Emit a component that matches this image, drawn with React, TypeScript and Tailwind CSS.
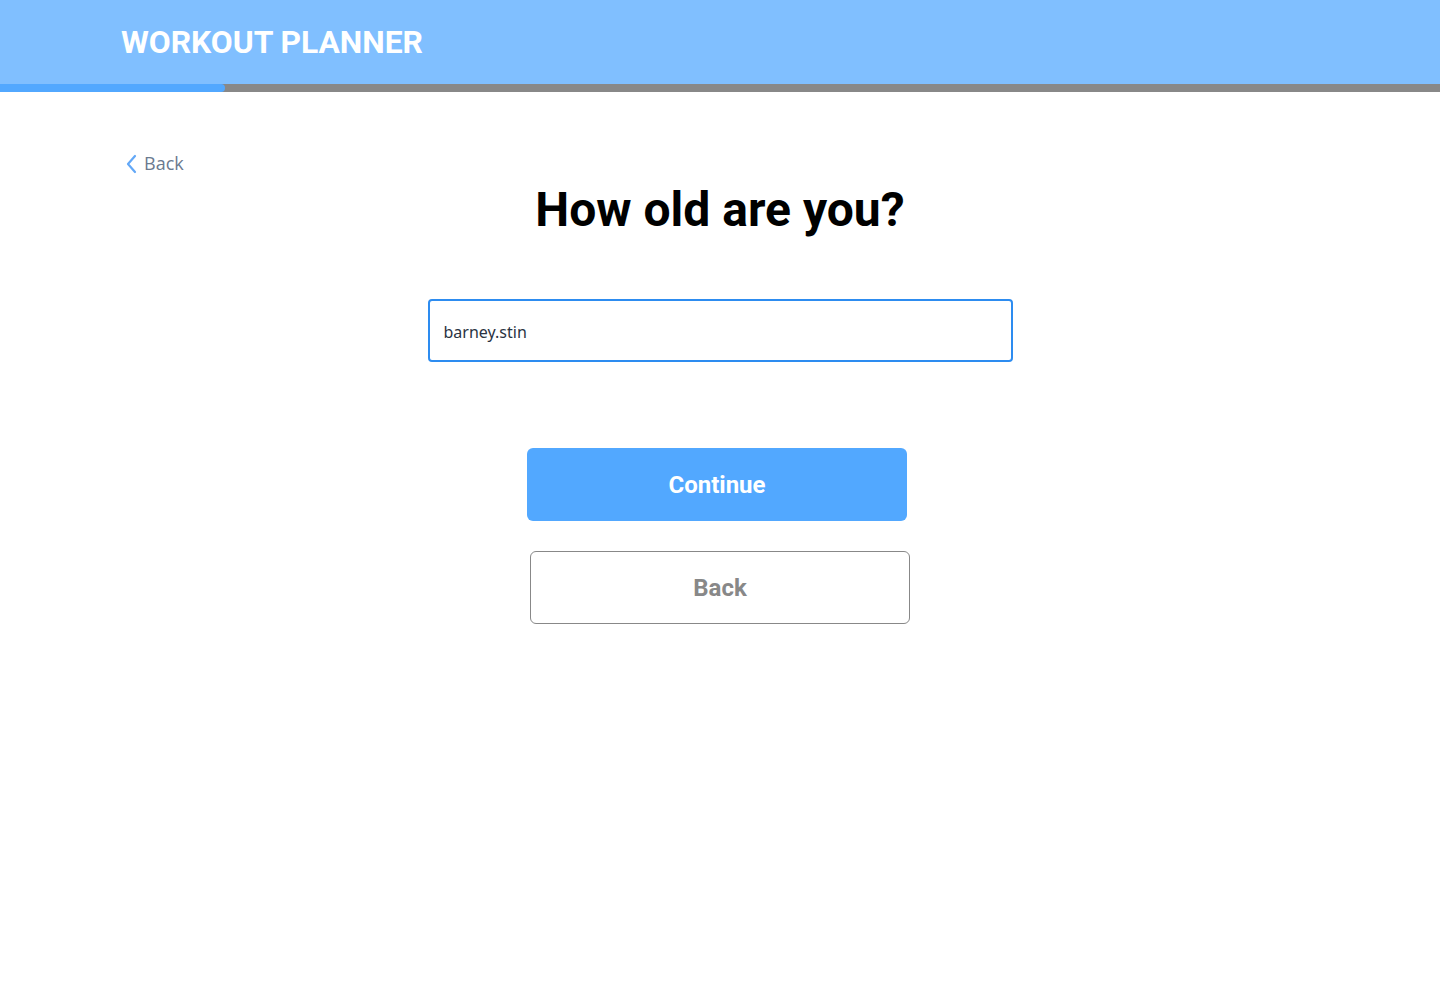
import React from "react";

export default function App() {
  return (
    <div className="min-h-[1000px] w-full bg-white" style={{ fontFamily: "Roboto, sans-serif" }}>
      <header className="h-[84px] bg-[#80bfff] flex items-center pl-[121px] pt-[2px]">
        <h1 className="text-[31.8px] font-bold text-white leading-none">WORKOUT PLANNER</h1>
      </header>
      <div className="h-[8px] bg-[#888888] flex">
        <div className="w-[225px] h-full bg-[#52a8ff] rounded-r-full" />
      </div>
      <div className="relative">
        <div className="pl-[124px] pt-[58px]">
          <button className="flex items-center gap-[4px] text-[18px] text-[#6b7a8f]" style={{ fontFamily: '"Open Sans", sans-serif' }}>
            <svg width="16" height="20" viewBox="0 0 16 20" fill="none" stroke="#63a8f7" strokeWidth="2.2" strokeLinecap="round" strokeLinejoin="round">
              <path d="M11 2 L4 10 L11 18" />
            </svg>
            <span>Back</span>
          </button>
        </div>
        <h2 className="text-center text-[48px] font-bold text-black leading-none mt-[9px]">How old are you?</h2>
        <div className="flex justify-center mt-[65px]">
          <div className="w-[585px] h-[63px] border-2 border-[#2d8cf0] rounded-[4px] flex items-center pl-[14px] pt-[2px]">
            <span className="text-[16px] text-[#2a3342]" style={{ fontFamily: '"Noto Sans", sans-serif' }}>barney.stin</span>
          </div>
        </div>
        <div className="flex flex-col items-center mt-[86px]">
          <button className="w-[380px] h-[73px] bg-[#52a8ff] rounded-[6px] text-white text-[24px] font-bold ml-[-6px]">Continue</button>
          <button className="w-[380px] h-[73px] border border-[#888888] rounded-[6px] text-[#888888] text-[24px] font-bold mt-[30px]">Back</button>
        </div>
      </div>
    </div>
  );
}
